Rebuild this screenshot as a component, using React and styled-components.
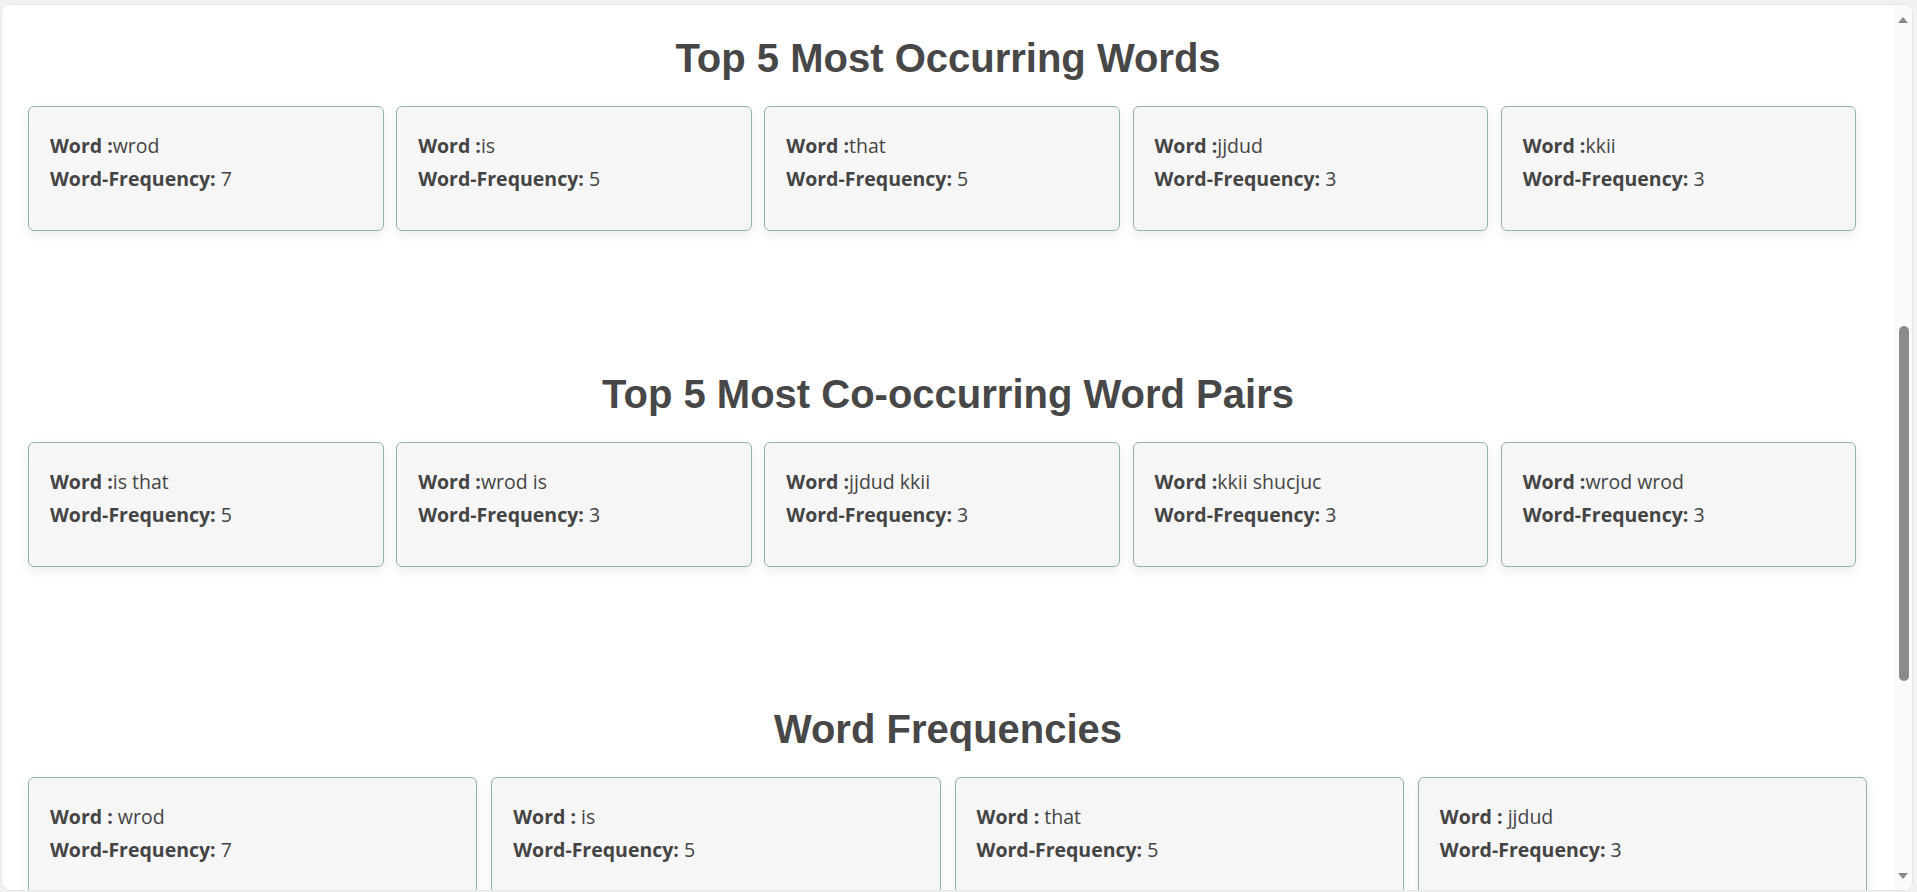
import React from "react";
import styled, { createGlobalStyle } from "styled-components";

const GlobalStyle = createGlobalStyle`
  html, body {
    margin: 0;
    padding: 0;
    height: 100%;
    background: #f1f1f1;
  }

  #root {
    height: 100%;
    box-sizing: border-box;
    padding: 5px 5px 2px 2px;
  }

  * {
    box-sizing: border-box;
  }
`;

const Window = styled.div`
  display: flex;
  height: 100%;
  background: #ffffff;
  border-radius: 8px;
  box-shadow: 0 0 0 1px #e6e6e6;
  overflow: hidden;
`;

const Content = styled.main`
  flex: 1;
  min-width: 0;
  padding-top: 30px;
  overflow: hidden;
`;

const ScrollBar = styled.div`
  width: 18px;
  flex-shrink: 0;
  display: flex;
  flex-direction: column;
  background: #fafafa;
`;

const ArrowButton = styled.div`
  height: 20px;
  display: flex;
  justify-content: center;
  align-items: center;
  padding: ${(p) => (p.$down ? "0 0 8px" : "10px 0 0")};
  color: #8a8a8a;
`;

const Track = styled.div`
  flex: 1;
  display: flex;
  justify-content: center;
`;

const Thumb = styled.div`
  width: 10px;
  margin-left: 1px;
  border-radius: 5px;
  background: #8b8b8b;
`;

const Section = styled.section`
  padding: 0 10px;
  margin-bottom: 139.5px;
`;

const Title = styled.h2`
  margin: 0 0 25px;
  text-align: center;
  font-family: "Liberation Sans", Arial, sans-serif;
  font-size: 40px;
  line-height: 46px;
  font-weight: 700;
  color: #474747;
`;

const CardRow = styled.div`
  display: flex;
  flex-wrap: wrap;
  column-gap: ${(p) => p.$gap}px;
  row-gap: 12.5px;
  padding-left: 16px;
  margin-right: -16px;
`;

const Card = styled.div`
  width: ${(p) => p.$width}%;
  height: 125px;
  padding: 22px 21px 0;
  background: #f6f6f6;
  border: 1px solid #8fb3a5;
  border-radius: 6px;
  box-shadow: 0 4px 12px rgba(0, 0, 0, 0.08);
  font-family: "Open Sans", "Noto Sans", sans-serif;
  font-size: 19.5px;
  color: #444;
`;

const Line = styled.p`
  margin: 0;
  line-height: 33px;
`;

const Label = styled.strong`
  font-weight: 700;
`;

const topWords = [
  ["wrod", 7],
  ["is", 5],
  ["that", 5],
  ["jjdud", 3],
  ["kkii", 3],
];

const topPairs = [
  ["is that", 5],
  ["wrod is", 3],
  ["jjdud kkii", 3],
  ["kkii shucjuc", 3],
  ["wrod wrod", 3],
];

const frequencies = [
  ["wrod", 7],
  ["is", 5],
  ["that", 5],
  ["jjdud", 3],
];

// where the page sits in its scroll: thumb offset and length, in px of the track
const thumb = { top: 301, length: 355 };

const WordCard = ({ word, count, width, spaced }) => (
  <Card $width={width}>
    <Line>
      <Label>Word :</Label>
      {spaced ? " " : ""}
      {word}
    </Line>
    <Line>
      <Label>Word-Frequency:</Label> {count}
    </Line>
  </Card>
);

const Arrow = ({ down }) => (
  <ArrowButton $down={down}>
    <svg width="10" height="6" viewBox="0 0 10 6">
      <polygon
        points={down ? "0,0 10,0 5,6" : "0,6 10,6 5,0"}
        fill="currentColor"
      />
    </svg>
  </ArrowButton>
);

const App = () => {
  return (
    <>
      <GlobalStyle />
      <Window>
        <Content>
          <Section>
            <Title>Top 5 Most Occurring Words</Title>
            <CardRow $gap={12.5}>
              {topWords.map(([word, count]) => (
                <WordCard key={word} word={word} count={count} width={19} />
              ))}
            </CardRow>
          </Section>

          <Section>
            <Title>Top 5 Most Co-occurring Word Pairs</Title>
            <CardRow $gap={12.5}>
              {topPairs.map(([word, count]) => (
                <WordCard key={word} word={word} count={count} width={19} />
              ))}
            </CardRow>
          </Section>

          <Section>
            <Title>Word Frequencies</Title>
            <CardRow $gap={14}>
              {frequencies.map(([word, count]) => (
                <WordCard key={word} word={word} count={count} width={24} spaced />
              ))}
            </CardRow>
          </Section>
        </Content>

        <ScrollBar>
          <Arrow />
          <Track>
            <Thumb style={{ marginTop: thumb.top, height: thumb.length }} />
          </Track>
          <Arrow down />
        </ScrollBar>
      </Window>
    </>
  );
};

export default App;
